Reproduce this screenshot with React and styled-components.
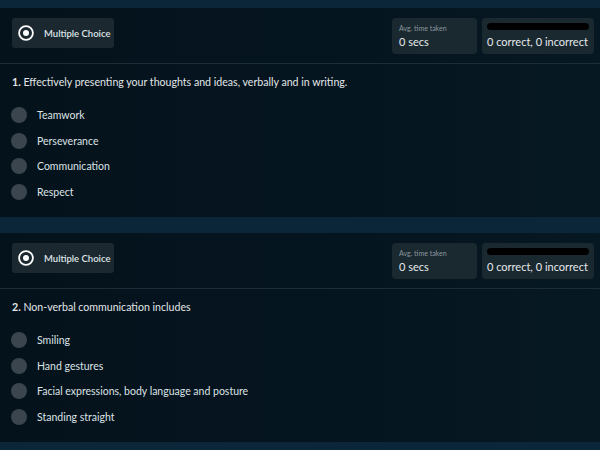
import React from 'react';
import styled, { createGlobalStyle } from 'styled-components';

const GlobalStyle = createGlobalStyle`
  html, body {
    margin: 0;
    padding: 0;
    background: #0a2638;
  }
  body {
    font-family: "Lato", "Noto Sans", sans-serif;
    color: #e4e8ea;
  }
`;

const Page = styled.div`
  display: flex;
  flex-direction: column;
  gap: 16px;
  padding: 8px 0;
  background: #0a2638;
  min-height: 450px;
  box-sizing: border-box;
`;

const Card = styled.section`
  background: linear-gradient(90deg, #04121b 0%, #051520 60%, #061822 100%);
  height: 209px;
  box-sizing: border-box;
`;

const Header = styled.div`
  display: flex;
  align-items: flex-start;
  padding: 10px 6px 10px 12px;
  border-bottom: 1px solid #1d2d38;
  height: 56px;
  box-sizing: border-box;
`;

const TypeBadge = styled.div`
  display: flex;
  align-items: center;
  gap: 10px;
  height: 30px;
  width: 102px;
  padding: 0 0 0 6px;
  box-sizing: border-box;
  background: #1b2830;
  border-radius: 3px;
  font-size: 9.5px;
  font-weight: 600;
  color: #dfe4e7;
`;

const Stats = styled.div`
  display: flex;
  gap: 5px;
  margin-left: auto;
`;

const StatBox = styled.div`
  display: flex;
  flex-direction: column;
  justify-content: ${p => (p.$bar ? 'flex-start' : 'center')};
  width: ${p => p.$width}px;
  height: 36px;
  padding: ${p => (p.$bar ? '5px 5px 0 5px' : '0 7px')};
  box-sizing: border-box;
  background: #1a2830;
  border-radius: 4px;
`;

const StatLabel = styled.span`
  font-size: 7px;
  color: #8b979e;
  margin-bottom: 3px;
`;

const StatValue = styled.span`
  font-size: 11px;
  color: #e6eaec;
`;

const Bar = styled.div`
  height: 7px;
  border-radius: 4px;
  background: #000000;
  margin-bottom: 5px;
`;

const Question = styled.p`
  margin: 0;
  padding: 12px 12px 19px;
  font-size: 10.6px;
  color: #e2e6e8;

  & b {
    font-weight: 700;
  }
`;

const Options = styled.ul`
  list-style: none;
  margin: 0;
  padding: 0 11px;
  display: flex;
  flex-direction: column;
  gap: 9.5px;
`;

const Option = styled.li`
  display: flex;
  align-items: center;
  gap: 10px;
  font-size: 10.5px;
  color: #dde2e5;
`;

const Dot = styled.span`
  width: 16px;
  height: 16px;
  border-radius: 50%;
  background: #3a454d;
  flex: none;
`;

const RadioIcon = () => (
  <svg width="16" height="16" viewBox="0 0 16 16">
    <circle cx="8" cy="8" r="6.9" fill="none" stroke="#ffffff" strokeWidth="1.8" />
    <circle cx="8" cy="8" r="3" fill="#ffffff" />
  </svg>
);

const questions = [
  {
    n: 1,
    text: 'Effectively presenting your thoughts and ideas, verbally and in writing.',
    options: ['Teamwork', 'Perseverance', 'Communication', 'Respect'],
  },
  {
    n: 2,
    text: 'Non-verbal communication includes',
    options: ['Smiling', 'Hand gestures', 'Facial expressions, body language and posture', 'Standing straight'],
  },
];

export default function App() {
  return (
    <>
      <GlobalStyle />
      <Page>
        {questions.map(q => (
          <Card key={q.n}>
            <Header>
              <TypeBadge>
                <RadioIcon />
                Multiple Choice
              </TypeBadge>
              <Stats>
                <StatBox $width={85}>
                  <StatLabel>Avg. time taken</StatLabel>
                  <StatValue>0 secs</StatValue>
                </StatBox>
                <StatBox $width={112} $bar>
                  <Bar />
                  <StatValue>0 correct, 0 incorrect</StatValue>
                </StatBox>
              </Stats>
            </Header>
            <Question>
              <b>{q.n}.</b> {q.text}
            </Question>
            <Options>
              {q.options.map(o => (
                <Option key={o}>
                  <Dot />
                  {o}
                </Option>
              ))}
            </Options>
          </Card>
        ))}
      </Page>
    </>
  );
}
